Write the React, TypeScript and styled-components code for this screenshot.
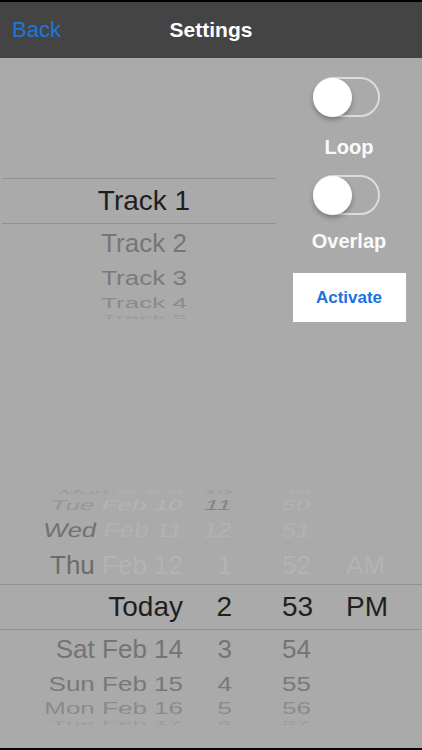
import styled, { createGlobalStyle } from 'styled-components'

const GlobalStyle = createGlobalStyle`
  html, body {
    margin: 0;
    padding: 0;
    background: #000;
  }
  body {
    font-family: 'Liberation Sans', Arial, sans-serif;
  }
`

type Slot = {
  height: number
  scale: number
  skew?: number
}

type FadedRow = Slot & {
  color: string
  label: string
}

const trackRows: FadedRow[] = [
  { label: 'Track 2', height: 38, scale: 0.97, color: '#767676' },
  { label: 'Track 3', height: 32, scale: 0.8, color: '#7a7a7a' },
  { label: 'Track 4', height: 18, scale: 0.58, color: '#8a8a8a' },
  { label: 'Track 5', height: 9, scale: 0.22, color: '#9a9a9a' },
]

type DateLine = Slot & {
  day: string
  date: string
  hour: string
  minute: string
  ampm?: string
  dayColor: string
  dateColor: string
  hourColor: string
  minuteColor: string
}

// rows above the selection: weekday darker, the rest washed out
const upperRows: DateLine[] = [
  { day: 'Mon', date: 'Feb 9', hour: '10', minute: '49', height: 9, scale: 0.22, skew: -14, dayColor: '#9c9c9c', dateColor: '#b1b1b1', hourColor: '#9c9c9c', minuteColor: '#b1b1b1' },
  { day: 'Tue', date: 'Feb 10', hour: '11', minute: '50', height: 18, scale: 0.55, skew: -12, dayColor: '#969696', dateColor: '#b4b4b4', hourColor: '#858585', minuteColor: '#b2b2b2' },
  { day: 'Wed', date: 'Feb 11', hour: '12', minute: '51', height: 32, scale: 0.77, skew: -9, dayColor: '#727272', dateColor: '#b2b2b2', hourColor: '#b2b2b2', minuteColor: '#b2b2b2' },
  { day: 'Thu', date: 'Feb 12', hour: '1', minute: '52', ampm: 'AM', height: 38, scale: 0.97, dayColor: '#6c6c6c', dateColor: '#b3b3b3', hourColor: '#b3b3b3', minuteColor: '#b3b3b3' },
]

const lowerRows: DateLine[] = [
  { day: 'Sat', date: 'Feb 14', hour: '3', minute: '54', height: 38, scale: 0.97, dayColor: '#747474', dateColor: '#747474', hourColor: '#747474', minuteColor: '#747474' },
  { day: 'Sun', date: 'Feb 15', hour: '4', minute: '55', height: 32, scale: 0.8, dayColor: '#787878', dateColor: '#787878', hourColor: '#787878', minuteColor: '#787878' },
  { day: 'Mon', date: 'Feb 16', hour: '5', minute: '56', height: 18, scale: 0.6, dayColor: '#8a8a8a', dateColor: '#8a8a8a', hourColor: '#8a8a8a', minuteColor: '#8a8a8a' },
  { day: 'Tue', date: 'Feb 17', hour: '6', minute: '57', height: 9, scale: 0.22, dayColor: '#9c9c9c', dateColor: '#9c9c9c', hourColor: '#9c9c9c', minuteColor: '#9c9c9c' },
]

const App = () => {
  return (
    <>
      <GlobalStyle />
      <Screen>
        <NavBar>
          <BackButton type="button">Back</BackButton>
          <Title>Settings</Title>
        </NavBar>

        <Content>
          <TopSection>
            <TrackWheel>
              <TrackBand>
                <WheelText $size={28} $color="#1f1f1f">
                  Track 1
                </WheelText>
              </TrackBand>
              {trackRows.map((row) => (
                <TrackRow key={row.label} $height={row.height}>
                  <WheelText $size={26} $color={row.color} $scale={row.scale}>
                    {row.label}
                  </WheelText>
                </TrackRow>
              ))}
            </TrackWheel>

            <Controls>
              <Switch>
                <Knob />
              </Switch>
              <SwitchLabel $gap={18}>Loop</SwitchLabel>
              <Switch $gap={16}>
                <Knob />
              </Switch>
              <SwitchLabel $gap={14}>Overlap</SwitchLabel>
              <ActivateButton type="button">Activate</ActivateButton>
            </Controls>
          </TopSection>

          <DatePicker>
            {upperRows.map((row) => (
              <DateRow key={row.date} $height={row.height}>
                <DateLineGrid $scale={row.scale} $skew={row.skew ?? 0} $size={26}>
                  <DayCell>
                    <Tint $color={row.dayColor}>{row.day}</Tint>{' '}
                    <Tint $color={row.dateColor}>{row.date}</Tint>
                  </DayCell>
                  <HourCell $color={row.hourColor}>{row.hour}</HourCell>
                  <MinuteCell $color={row.minuteColor}>{row.minute}</MinuteCell>
                  <AmPmCell $color={row.minuteColor}>{row.ampm}</AmPmCell>
                </DateLineGrid>
              </DateRow>
            ))}

            <DateRow $height={44} $selected>
              <DateLineGrid $scale={1} $skew={0} $size={28}>
                <DayCell>
                  <Tint $color="#1f1f1f">Today</Tint>
                </DayCell>
                <HourCell $color="#1f1f1f">2</HourCell>
                <MinuteCell $color="#1f1f1f">53</MinuteCell>
                <AmPmCell $color="#1f1f1f">PM</AmPmCell>
              </DateLineGrid>
            </DateRow>

            {lowerRows.map((row) => (
              <DateRow key={row.date} $height={row.height}>
                <DateLineGrid $scale={row.scale} $skew={0} $size={26}>
                  <DayCell>
                    <Tint $color={row.dayColor}>
                      {row.day} {row.date}
                    </Tint>
                  </DayCell>
                  <HourCell $color={row.hourColor}>{row.hour}</HourCell>
                  <MinuteCell $color={row.minuteColor}>{row.minute}</MinuteCell>
                  <AmPmCell $color={row.minuteColor} />
                </DateLineGrid>
              </DateRow>
            ))}
          </DatePicker>
        </Content>
      </Screen>
    </>
  )
}

const Screen = styled.div`
  width: 422px;
  height: 750px;
  box-sizing: border-box;
  border-top: 2px solid #000;
  border-bottom: 2px solid #000;
  display: flex;
  flex-direction: column;
  background: #aaaaaa;
  overflow: hidden;
`

const NavBar = styled.header`
  flex: none;
  height: 56px;
  padding: 0 12px;
  background: #444444;
  display: grid;
  grid-template-columns: 1fr auto 1fr;
  align-items: center;
`

const BackButton = styled.button`
  justify-self: start;
  padding: 0;
  border: none;
  background: none;
  font-family: 'Liberation Sans', Arial, sans-serif;
  font-size: 22px;
  color: #1c76dc;
  cursor: pointer;
`

const Title = styled.h1`
  margin: 0;
  font-size: 21px;
  font-weight: 700;
  color: #ffffff;
`

const Content = styled.main`
  flex: 1;
  display: flex;
  flex-direction: column;
`

const TopSection = styled.section`
  display: flex;
`

const TrackWheel = styled.div`
  width: 274px;
  margin-left: 2px;
  padding-top: 120px;
  display: flex;
  flex-direction: column;
`

const TrackBand = styled.div`
  height: 44px;
  padding-left: 10px;
  border-top: 1px solid #929292;
  border-bottom: 1px solid #929292;
  display: flex;
  align-items: center;
  justify-content: center;
`

const TrackRow = styled.div<{ $height: number }>`
  height: ${(p) => p.$height}px;
  padding-left: 10px;
  overflow: hidden;
  display: flex;
  align-items: center;
  justify-content: center;
`

const WheelText = styled.span<{ $size: number; $color: string; $scale?: number }>`
  font-size: ${(p) => p.$size}px;
  line-height: 1;
  color: ${(p) => p.$color};
  white-space: nowrap;
  transform: scaleY(${(p) => p.$scale ?? 1});
`

const Controls = styled.div`
  flex: 1;
  padding-top: 19px;
  display: flex;
  flex-direction: column;
  align-items: center;
`

const Switch = styled.div<{ $gap?: number }>`
  width: 67px;
  height: 40px;
  box-sizing: border-box;
  margin-top: ${(p) => p.$gap ?? 0}px;
  margin-right: 5px;
  border: 2px solid #dcdcdc;
  border-radius: 20px;
  display: flex;
  align-items: center;
`

const Knob = styled.div`
  width: 39px;
  height: 39px;
  margin-left: -2px;
  flex: none;
  border-radius: 50%;
  background: #ffffff;
  box-shadow: 0 3px 5px rgba(0, 0, 0, 0.28);
`

const SwitchLabel = styled.div<{ $gap: number }>`
  margin-top: ${(p) => p.$gap}px;
  font-size: 20px;
  line-height: 24px;
  font-weight: 700;
  color: #fafafa;
`

const ActivateButton = styled.button`
  width: 113px;
  height: 49px;
  margin-top: 20px;
  border: none;
  background: #ffffff;
  font-family: 'Liberation Sans', Arial, sans-serif;
  font-size: 17px;
  font-weight: 700;
  color: #1a72de;
  cursor: pointer;
`

const DatePicker = styled.section`
  margin-top: auto;
  margin-bottom: 21px;
  display: flex;
  flex-direction: column;
`

const DateRow = styled.div<{ $height: number; $selected?: boolean }>`
  height: ${(p) => p.$height}px;
  overflow: hidden;
  display: flex;
  align-items: center;
  ${(p) =>
    p.$selected &&
    `
    border-top: 1px solid #929292;
    border-bottom: 1px solid #929292;
  `}
`

const DateLineGrid = styled.div<{ $scale: number; $skew: number; $size: number }>`
  width: 100%;
  display: grid;
  grid-template-columns: 183px 49px 114px 1fr;
  font-size: ${(p) => p.$size}px;
  line-height: 1;
  white-space: nowrap;
  transform: scaleY(${(p) => p.$scale}) skewX(${(p) => p.$skew}deg);
`

const DayCell = styled.div`
  text-align: right;
`

const Tint = styled.span<{ $color: string }>`
  color: ${(p) => p.$color};
`

const HourCell = styled.div<{ $color: string }>`
  text-align: right;
  color: ${(p) => p.$color};
`

const MinuteCell = styled.div<{ $color: string }>`
  padding-left: 50px;
  color: ${(p) => p.$color};
`

const AmPmCell = styled.div<{ $color: string }>`
  color: ${(p) => p.$color};
`

export default App
